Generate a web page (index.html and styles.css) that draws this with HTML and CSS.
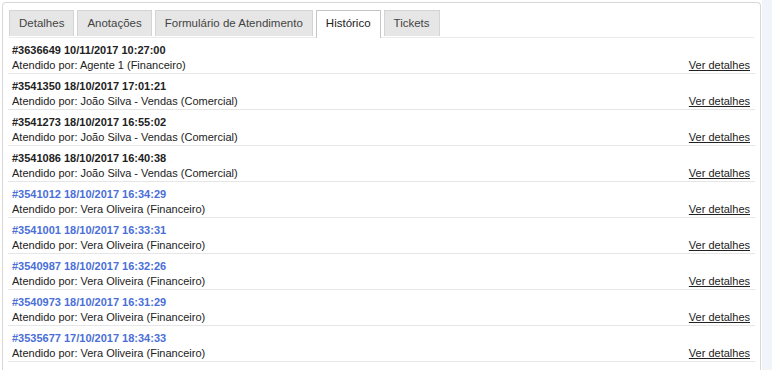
FILE: index.html
```html
<!DOCTYPE html>
<html lang="pt-BR">
<head>
    <meta charset="UTF-8">
    <link rel="stylesheet" href="styles.css">
    <title>Histórico</title>
</head>
<body>
    <div class="page">
        <div class="panel">
            <ul class="tabs">
                <li class="tab">Detalhes</li>
                <li class="tab">Anotações</li>
                <li class="tab">Formulário de Atendimento</li>
                <li class="tab active">Histórico</li>
                <li class="tab">Tickets</li>
            </ul>

            <ul class="history">
                <li class="item">
                    <div class="title">#3636649 10/11/2017 10:27:00</div>
                    <div class="line"><span>Atendido por: Agente 1 (Financeiro)</span><a href="#">Ver detalhes</a></div>
                </li>
                <li class="item">
                    <div class="title">#3541350 18/10/2017 17:01:21</div>
                    <div class="line"><span>Atendido por: João Silva - Vendas (Comercial)</span><a href="#">Ver detalhes</a></div>
                </li>
                <li class="item">
                    <div class="title">#3541273 18/10/2017 16:55:02</div>
                    <div class="line"><span>Atendido por: João Silva - Vendas (Comercial)</span><a href="#">Ver detalhes</a></div>
                </li>
                <li class="item">
                    <div class="title">#3541086 18/10/2017 16:40:38</div>
                    <div class="line"><span>Atendido por: João Silva - Vendas (Comercial)</span><a href="#">Ver detalhes</a></div>
                </li>
                <li class="item">
                    <div class="title blue">#3541012 18/10/2017 16:34:29</div>
                    <div class="line"><span>Atendido por: Vera Oliveira (Financeiro)</span><a href="#">Ver detalhes</a></div>
                </li>
                <li class="item">
                    <div class="title blue">#3541001 18/10/2017 16:33:31</div>
                    <div class="line"><span>Atendido por: Vera Oliveira (Financeiro)</span><a href="#">Ver detalhes</a></div>
                </li>
                <li class="item">
                    <div class="title blue">#3540987 18/10/2017 16:32:26</div>
                    <div class="line"><span>Atendido por: Vera Oliveira (Financeiro)</span><a href="#">Ver detalhes</a></div>
                </li>
                <li class="item">
                    <div class="title blue">#3540973 18/10/2017 16:31:29</div>
                    <div class="line"><span>Atendido por: Vera Oliveira (Financeiro)</span><a href="#">Ver detalhes</a></div>
                </li>
                <li class="item">
                    <div class="title blue">#3535677 17/10/2017 18:34:33</div>
                    <div class="line"><span>Atendido por: Vera Oliveira (Financeiro)</span><a href="#">Ver detalhes</a></div>
                </li>
            </ul>
        </div>
        <div class="side"></div>
    </div>
</body>
</html>
```

FILE: styles.css
```css
body {
    margin: 0;
    background: #fff;
    font-family: "Liberation Sans", Arial, Helvetica, sans-serif;
    font-size: 11px;
    color: #222;
    overflow: hidden;
}

.page {
    display: flex;
    height: 370px;
}

.panel {
    width: 745px;
    margin: 2px 0 0 2px;
    padding: 7px 6px 0 6px;
    border: 1px solid #d8d8d8;
    border-bottom: none;
    border-radius: 4px 4px 0 0;
    background: #fff;
}

.side {
    flex: 1;
    background: #f1f5f9;
    margin-left: 1px;
}

.tabs {
    display: flex;
    gap: 3px;
    list-style: none;
    margin: 0;
    padding: 0;
    height: 27px;
    border-bottom: 1px solid #ececec;
}

.tab {
    height: 26px;
    line-height: 25px;
    padding: 0 9px;
    background: #e6e6e6;
    border: 1px solid #d4d4d4;
    border-bottom: none;
    color: #444;
    font-size: 11.5px;
    box-sizing: border-box;
}

.tab.active {
    background: #fff;
    border-color: #c6c6c6;
    color: #222;
    height: 28px;
}

.history {
    list-style: none;
    margin: 0 -1px;
    padding: 0;
}

.item {
    padding: 5px 5px 0 4px;
    border-bottom: 1px solid #e6e6e6;
    line-height: 15px;
}

.title {
    font-weight: bold;
    color: #222;
}

.title.blue {
    color: #4a6fd7;
}

.line {
    display: flex;
    justify-content: space-between;
}

.line a {
    color: #222;
    text-decoration: underline;
}
```
